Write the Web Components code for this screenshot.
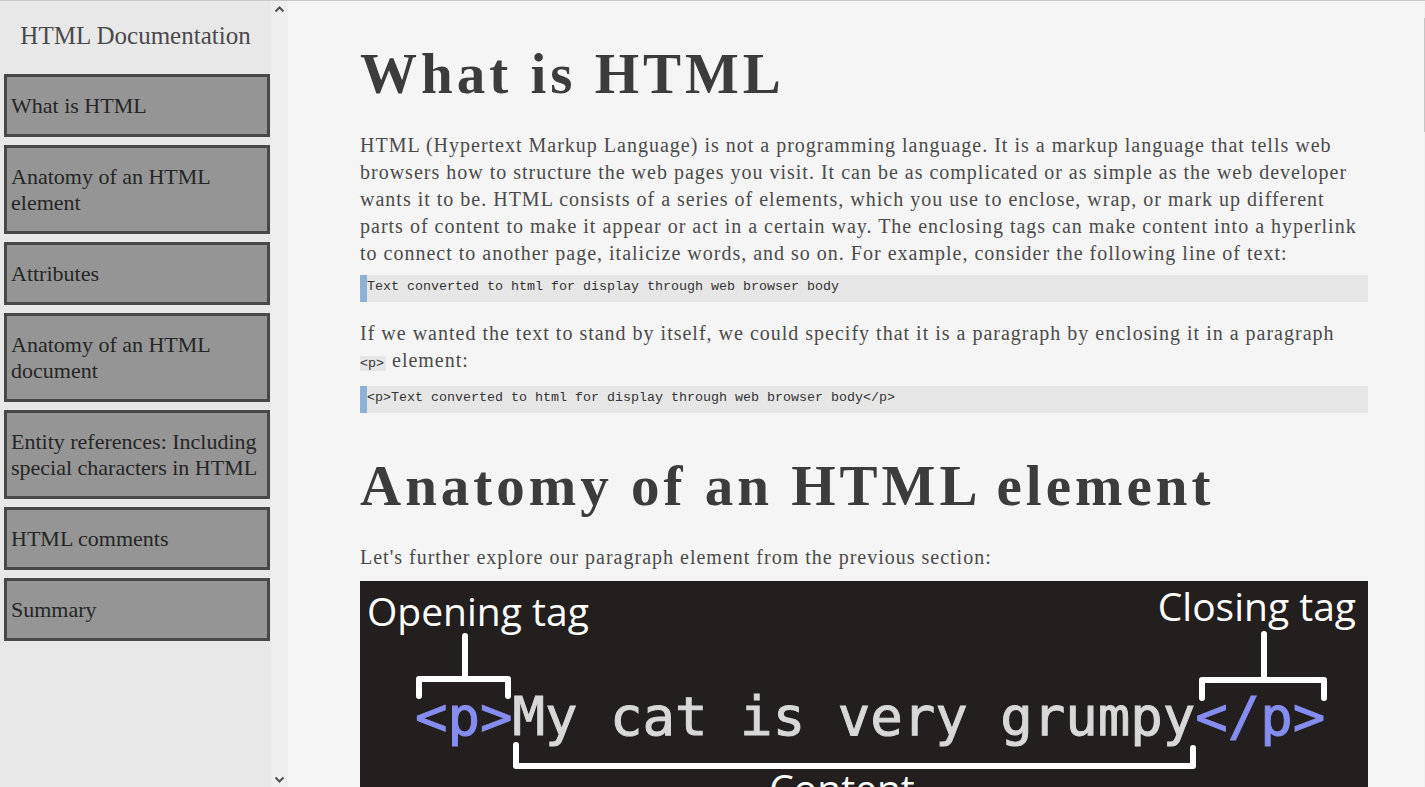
<!DOCTYPE html>
<html lang="en">
<head>
<meta charset="utf-8">
<title>HTML Documentation</title>
<style>
  html, body { margin: 0; height: 100%; }
  body { background: #f5f5f5; color: #4a4a4a; font-family: "Liberation Serif", serif; overflow: hidden; }
</style>
</head>
<body>
<doc-shell>
  <doc-nav slot="nav" heading="HTML Documentation">
    <doc-link href="#what">What is HTML</doc-link>
    <doc-link href="#anatomy">Anatomy of an HTML element</doc-link>
    <doc-link href="#attributes">Attributes</doc-link>
    <doc-link href="#document">Anatomy of an HTML document</doc-link>
    <doc-link href="#entities">Entity references: Including special characters in HTML</doc-link>
    <doc-link href="#comments">HTML comments</doc-link>
    <doc-link href="#summary">Summary</doc-link>
  </doc-nav>

  <doc-section id="what" heading="What is HTML">
    <doc-text>HTML (Hypertext Markup Language) is not a programming language. It is a markup language that tells web browsers how to structure the web pages you visit. It can be as complicated or as simple as the web developer wants it to be. HTML consists of a series of elements, which you use to enclose, wrap, or mark up different parts of content to make it appear or act in a certain way. The enclosing tags can make content into a hyperlink to connect to another page, italicize words, and so on. For example, consider the following line of text:</doc-text>
    <doc-code>Text converted to html for display through web browser body</doc-code>
    <doc-text>If we wanted the text to stand by itself, we could specify that it is a paragraph by enclosing it in a paragraph<br><doc-tag>&lt;p&gt;</doc-tag> element:</doc-text>
    <doc-code>&lt;p&gt;Text converted to html for display through web browser body&lt;/p&gt;</doc-code>
  </doc-section>

  <doc-section id="anatomy" heading="Anatomy of an HTML element">
    <doc-text>Let's further explore our paragraph element from the previous section:</doc-text>
    <element-diagram></element-diagram>
  </doc-section>
</doc-shell>

<script>
  const define = (name, markup, setup) => {
    customElements.define(name, class extends HTMLElement {
      constructor() {
        super();
        const template = document.createElement("template");
        template.innerHTML = markup;
        this.attachShadow({ mode: "open" }).append(template.content.cloneNode(true));
      }
      connectedCallback() {
        if (setup) setup(this, this.shadowRoot);
      }
    });
  };

  const setHeading = (host, root) => {
    root.querySelector("h1").textContent = host.getAttribute("heading");
  };

  define("doc-shell", `
    <style>
      :host { display: flex; height: 100vh; box-sizing: border-box; border-top: 1px solid #c8c8c8; }
      aside { flex: none; width: 288px; display: flex; background: #e8e8e8; }
      ::slotted(doc-nav) { flex: 1; }
      main { flex: 1; min-width: 0; overflow: hidden; padding: 40px 56px 0 72px; }
      .page-track { flex: none; width: 1px; padding-top: 17px; background: #f1f1f1; }
      .thumb { height: 114px; background: #c5c5c5; }
    </style>
    <aside><slot name="nav"></slot><scroll-track></scroll-track></aside>
    <main><slot></slot></main>
    <div class="page-track"><div class="thumb"></div></div>`);

  define("scroll-track", `
    <style>
      :host { display: flex; flex: none; width: 17px; flex-direction: column; justify-content: space-between; align-items: center; background: #efefef; }
      svg { display: block; width: 17px; height: 16px; fill: none; stroke: #505050; stroke-width: 2; }
    </style>
    <svg viewBox="0 0 17 16" aria-hidden="true"><path d="M4.5 10.5 L8.5 6.5 L12.5 10.5"/></svg>
    <svg viewBox="0 0 17 16" aria-hidden="true"><path d="M4.5 6.5 L8.5 10.5 L12.5 6.5"/></svg>`);

  define("doc-nav", `
    <style>
      :host { display: block; }
      h1 { margin: 0; padding: 20px 0 23px; font-size: 25px; line-height: 30px; font-weight: 400; text-align: center; color: #4a4a4a; }
      nav { display: flex; flex-direction: column; gap: 8px; padding: 0 1px 0 4px; }
    </style>
    <h1></h1>
    <nav aria-label="Sections"><slot></slot></nav>`, setHeading);

  define("doc-link", `
    <style>
      :host { display: block; }
      a { display: block; border: 3px solid #484848; padding: 16px 4px 15px; background: #959595; color: #262626; font-size: 22px; line-height: 26px; text-decoration: none; }
    </style>
    <a><slot></slot></a>`, (host, root) => {
      root.querySelector("a").setAttribute("href", host.getAttribute("href"));
    });

  define("doc-section", `
    <style>
      :host { display: block; margin-bottom: 40px; }
      h1 { margin: 0 0 25px; font-size: 57px; line-height: 66px; font-weight: 700; letter-spacing: 4px; color: #3c3c3c; }
    </style>
    <h1></h1>
    <slot></slot>`, setHeading);

  define("doc-text", `
    <style>
      :host { display: block; }
      p { margin: 0; font-size: 20px; line-height: 27px; letter-spacing: 1px; }
    </style>
    <p><slot></slot></p>`);

  define("doc-tag", `
    <style>
      :host { display: inline-block; margin-bottom: 7px; font-size: 16px; line-height: 15px; letter-spacing: 0; }
      code { display: block; padding-right: 2px; background: #e6e6e6; color: #333; font-family: "Liberation Mono", monospace; font-size: smaller; }
    </style>
    <code><slot></slot></code>`);

  define("doc-code", `
    <style>
      :host { display: block; margin: 8px 0 18px; font-size: 16px; }
      pre { margin: 0; border-left: 7px solid #8db2d6; padding-bottom: 3px; background: #e6e6e6; color: #333; font-family: "Liberation Mono", monospace; font-size: smaller; line-height: 24px; }
      code { font: inherit; }
    </style>
    <pre><code><slot></slot></code></pre>`);

  define("element-diagram", `
    <style>
      :host { display: block; margin-top: 10px; background: #231f1f; }
      svg { display: block; width: 100%; }
      .label { font: 39px "Open Sans", sans-serif; fill: #fff; }
      .source { font: 54px "DejaVu Sans Mono", monospace; fill: #d8d8d8; stroke: #d8d8d8; stroke-width: 1; white-space: pre; }
      .tag { fill: #868df0; stroke: #868df0; }
      path { fill: none; stroke: #fff; stroke-width: 6; stroke-linecap: round; stroke-linejoin: round; }
    </style>
    <svg viewBox="0 0 1008 300" role="img" aria-label="Anatomy of a paragraph element">
      <text class="label" x="7" y="45">Opening tag</text>
      <text class="label" x="996" y="40" text-anchor="end">Closing tag</text>
      <text class="source" x="55" y="154"><tspan class="tag">&lt;p&gt;</tspan>My cat is very grumpy<tspan class="tag">&lt;/p&gt;</tspan></text>
      <path d="M105 55 V98 M59 115 V98 H148 V115"/>
      <path d="M904 53 V99 M842 117 V99 H964 V117"/>
      <path d="M156 164 V185 H833 V167"/>
      <text class="label" x="482" y="222" text-anchor="middle">Content</text>
    </svg>`);
</script>
</body>
</html>
